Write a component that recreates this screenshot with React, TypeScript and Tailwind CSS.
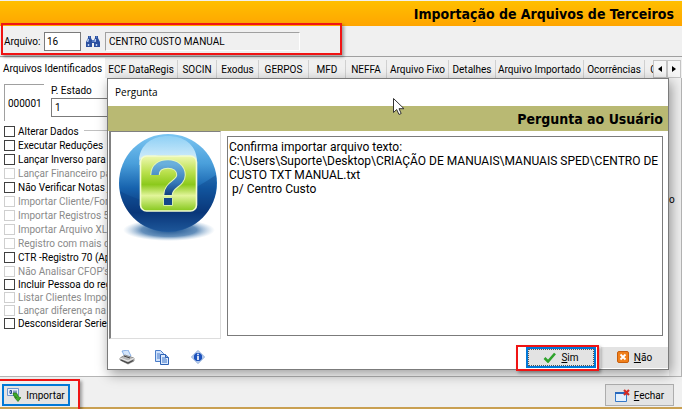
import type { ReactNode } from "react";

const tabs = [
  { name: "ECF DataRegis", width: "w-[73px]" },
  { name: "SOCIN", width: "w-[39px]" },
  { name: "Exodus", width: "w-[42px]" },
  { name: "GERPOS", width: "w-[50px]" },
  { name: "MFD", width: "w-[37px]" },
  { name: "NEFFA", width: "w-[41px]" },
  { name: "Arquivo Fixo", width: "w-[62px]" },
  { name: "Detalhes", width: "w-[47px]" },
  { name: "Arquivo Importado", width: "w-[88px]" },
  { name: "Ocorrências", width: "w-[61px]" },
  { name: "C", width: "w-[18px]" },
];

type Option = { label: string; enabled: boolean };

const options: Option[] = [
  { label: "Alterar Dados", enabled: true },
  { label: "Executar Reduções", enabled: true },
  { label: "Lançar Inverso para N", enabled: true },
  { label: "Lançar Financeiro par", enabled: false },
  { label: "Não Verificar Notas já", enabled: true },
  { label: "Importar Cliente/Forne", enabled: false },
  { label: "Importar Registros 54", enabled: false },
  { label: "Importar Arquivo XLS", enabled: false },
  { label: "Registro com mais de", enabled: false },
  { label: "CTR -Registro 70 (Ap", enabled: true },
  { label: "Não Analisar CFOP's", enabled: false },
];

const lastOptions: Option[] = [
  { label: "Incluir Pessoa do regi", enabled: true },
  { label: "Listar Clientes Importa", enabled: false },
  { label: "Lançar diferença na c", enabled: false },
  { label: "Desconsiderar Serie a", enabled: true },
];

function Check({ label, enabled }: Option) {
  return (
    <label
      className={`flex items-center gap-[3px] whitespace-nowrap ${enabled ? "text-black" : "text-[#8a8a8a]"}`}
    >
      <input
        type="checkbox"
        disabled={!enabled}
        className={`size-[11px] shrink-0 appearance-none border bg-white ${enabled ? "border-[#404040]" : "border-[#cfcfcf]"}`}
      />
      {label}
    </label>
  );
}

function Highlight({ className }: { className: string }) {
  return (
    <div
      className={`pointer-events-none absolute border-2 border-[#f01414] shadow-[2px_2px_3px_rgba(0,0,0,0.35)] ${className}`}
    />
  );
}

function Binoculars() {
  return (
    <svg viewBox="0 0 14 13" className="h-[13px] w-[14px]">
      <path d="M2 1h3v2l1 2h2l1-2V1h3v2l2 4v5H8V8H6v4H0V7l2-4z" fill="#2b50a0" />
      <path d="M2.5 4 1.5 7M9.5 4 9 7M2.5 9v2M10.5 9v2" stroke="#b9d0f5" strokeWidth="1.4" />
      <path d="M3 2h1M10 2h1M6 6h2" stroke="#7ea4e6" />
    </svg>
  );
}

function QuestionBall() {
  return (
    <svg viewBox="0 0 104 110" className="h-[110px] w-[104px]" role="img" aria-label="Pergunta">
      <defs>
        <linearGradient id="ball" x1="0" y1="0" x2="0" y2="1">
          <stop offset="0" stopColor="#7cc6f2" />
          <stop offset="0.3" stopColor="#4a9fdb" />
          <stop offset="0.55" stopColor="#1763ae" />
          <stop offset="0.8" stopColor="#0a3475" />
          <stop offset="1" stopColor="#2a66a8" />
        </linearGradient>
        <linearGradient id="gloss" x1="0" y1="0" x2="0" y2="1">
          <stop offset="0" stopColor="#8fd0f5" />
          <stop offset="1" stopColor="#d3edfb" />
        </linearGradient>
        <linearGradient id="card" x1="0" y1="0" x2="0" y2="1">
          <stop offset="0" stopColor="#eef8b0" />
          <stop offset="0.3" stopColor="#b9e04c" />
          <stop offset="0.52" stopColor="#8cc91c" />
          <stop offset="0.72" stopColor="#e2f59a" />
          <stop offset="1" stopColor="#86c81c" />
        </linearGradient>
        <linearGradient id="mark" x1="0" y1="0" x2="0" y2="1">
          <stop offset="0" stopColor="#6ab0dc" />
          <stop offset="0.6" stopColor="#3679b8" />
          <stop offset="1" stopColor="#123f80" />
        </linearGradient>
        <radialGradient id="shade">
          <stop offset="0" stopColor="#174f8e" />
          <stop offset="0.6" stopColor="#3f74aa" stopOpacity="0.8" />
          <stop offset="1" stopColor="#8fb3d4" stopOpacity="0" />
        </radialGradient>
      </defs>
      <ellipse cx="53" cy="97" rx="46" ry="11" fill="url(#shade)" />
      <circle cx="52" cy="50" r="49" fill="url(#ball)" />
      <path d="M4 58q20 12 40 10t56-26q3 30-19 47Q54 108 24 90 6 76 4 58z" fill="#0a3d82" opacity="0.35" />
      <path d="M23 27C24 11 37 3 52 3s28 8 29 24q-29-10-58 0z" fill="url(#gloss)" />
      <path d="M23 27q29-10 58 0v5H23z" fill="#c9e8f9" opacity="0.6" />
      <rect x="24.5" y="23" width="56" height="55" rx="6" fill="url(#card)" stroke="#f2fbd0" strokeWidth="1.6" />
      <path
        d="M39 42c0-8 6-11 13-11s13 4 13 11c0 9-13 9-13 21"
        fill="none"
        stroke="#e4f5b8"
        strokeWidth="9.5"
      />
      <path d="M39 42c0-8 6-11 13-11s13 4 13 11c0 9-13 9-13 20" fill="none" stroke="url(#mark)" strokeWidth="7.5" />
      <path d="M47.500 64.500h9v8h-9z" fill="#15478a" stroke="#d6efa4" />
    </svg>
  );
}

function Printer() {
  return (
    <svg viewBox="0 0 16 15" className="h-[15px] w-4">
      <path d="m3 1 6-1 3 6-5 3z" fill="#d5e6fb" stroke="#6f9ede" strokeWidth="0.8" />
      <path d="m1 8 5-3 9 3v3l-6 3-8-4z" fill="#b8b8b8" stroke="#777" strokeWidth="0.7" />
      <path d="m1 8 8 3 6-3" fill="none" stroke="#eee" />
      <path d="m2 10 7 3 5-2.500" fill="none" stroke="#444" strokeWidth="1.3" />
      <path d="m5 6 6 2" stroke="#444" />
    </svg>
  );
}

function Pages() {
  return (
    <svg viewBox="0 0 14 15" className="h-[15px] w-3.5">
      <path d="M.5.5h5l3 3v8h-8z" fill="#cfe1fb" stroke="#4a7dc9" />
      <path d="M2 4h3M2 6h3M2 8h3" stroke="#4a7dc9" />
      <path d="M5.500 4.500h5l3 3v7h-8z" fill="#dceafd" stroke="#2e62b4" />
      <path d="M7 8h4M7 10h5M7 12h5" stroke="#3c74c8" />
      <path d="M10.500 4.500v3h3" fill="#86ace8" stroke="#2e62b4" />
    </svg>
  );
}

function Info() {
  return (
    <svg viewBox="0 0 14 14" className="size-3.5">
      <path d="m7 .5 6.500 6.500L7 13.500.5 7z" fill="#dbe7f8" stroke="#7f9fd0" />
      <circle cx="7" cy="7" r="4.300" fill="#1c52bd" />
      <path d="M7 5.800V10M7 3.700V5" stroke="#fff" strokeWidth="1.600" />
    </svg>
  );
}

function ImportIcon() {
  return (
    <svg viewBox="0 0 14 14" className="size-3.5">
      <path d="M.5.5h11v7h-11z" fill="#e9f0fb" stroke="#6f97cf" />
      <path d="M3 2.500h1.500v3H3zM7 2.500v3M9 2.500v3" fill="none" stroke="#23498f" />
      <path d="M6 5q0 4 3.500 4.500H7.500l3.500 4 3-4h-1.500Q11 8 9.500 5z" fill="#3faa2a" stroke="#1c7015" strokeWidth="0.7" />
    </svg>
  );
}

function CloseWindow() {
  return (
    <svg viewBox="0 0 15 13" className="h-[13px] w-[15px]">
      <path d="M.5 3.500h11v9H.5z" fill="#e4f0fd" stroke="#3478c8" />
      <path d="M0 4h12" stroke="#2868bd" strokeWidth="2" />
      <path d="m9 1 5 5M14 1 9 6" stroke="#d32a24" strokeWidth="2.200" />
    </svg>
  );
}

function Button({ children, className }: { children: ReactNode; className: string }) {
  return (
    <button type="button" className={`flex items-center justify-center bg-[#e3e3e3] ${className}`}>
      {children}
    </button>
  );
}

function Dialog() {
  return (
    <section
      role="dialog"
      aria-label="Pergunta"
      className="absolute top-[78px] right-[13px] left-[107px] border border-[#7b7b7b] bg-white shadow-[2px_4px_12px_rgba(0,0,0,0.4)]"
    >
      <div className="flex h-[27px] items-center px-[7px] font-['Open_Sans',sans-serif] text-[10px]">Pergunta</div>
      <h2 className="h-[25px] bg-[#b9b973] pr-[5px] text-right font-['DejaVu_Sans_Condensed','Noto_Sans',sans-serif] text-[14px] leading-[26px] font-bold">
        Pergunta ao Usuário
      </h2>
      <div className="flex items-start pr-[5px] pl-px">
        <div className="mr-[6px] h-[208px] w-[112px] shrink-0 border-t border-r border-b border-l-2 border-t-[#808080] border-r-[#dddddd] border-b-[#dddddd] border-l-[#808080] pt-px pl-[5px]">
          <QuestionBall />
        </div>
        <textarea
          readOnly
          aria-label="Mensagem"
          className="mt-[5px] block h-[200px] min-w-0 flex-1 resize-none overflow-hidden border border-[#7b7b7b] px-px py-[3px] font-[Roboto,sans-serif] text-[12px] leading-[14px] outline-none"
          value={
            "Confirma importar arquivo texto:\nC:\\Users\\Suporte\\Desktop\\CRIAÇÃO DE MANUAIS\\MANUAIS SPED\\CENTRO DE\nCUSTO TXT MANUAL.txt\n p/ Centro Custo"
          }
        />
      </div>
      <div className="flex h-[30px] items-center pt-[6px] pl-[11px]">
        <button type="button" aria-label="Imprimir" className="mr-5">
          <Printer />
        </button>
        <button type="button" aria-label="Copiar" className="mr-[22px]">
          <Pages />
        </button>
        <button type="button" aria-label="Informações">
          <Info />
        </button>
        <Button className="ml-auto h-[21px] w-[70px] gap-[5px] border-2 border-[#0078d7] outline-1 -outline-offset-3 outline-dotted outline-[#555]">
          <svg viewBox="0 0 13 11" className="h-[11px] w-[13px]">
            <path d="m1.500 6 3.500 3.500L12 1.500" fill="none" stroke="#2fa32c" strokeWidth="2.600" />
          </svg>
          <span>
            <u>S</u>im
          </span>
        </Button>
        <Button className="ml-[5px] h-[21px] w-[67px] gap-[5px]">
          <svg viewBox="0 0 12 12" className="size-3">
            <rect x="0.500" y="0.500" width="11" height="11" rx="1.500" fill="#f07f1a" stroke="#c85e0c" />
            <path d="m3.500 3.500 5 5M8.500 3.500l-5 5" stroke="#fff" strokeWidth="1.800" />
          </svg>
          <span>
            <u>N</u>ão
          </span>
        </Button>
      </div>
    </section>
  );
}

export default function App() {
  return (
    <main className="relative flex min-h-screen flex-col overflow-hidden bg-[#f0f0f0] font-[Roboto,sans-serif] text-[10px] leading-[13px] text-black">
      <h1 className="mt-px h-[25px] bg-linear-to-b from-[#ffbf00] to-[#ffa500] pr-2 text-right font-['DejaVu_Sans_Condensed','Noto_Sans',sans-serif] text-[14px] leading-[26px] font-bold">
        Importação de Arquivos de Terceiros
      </h1>

      <form className="flex h-[30px] items-center pl-1">
        <label htmlFor="arquivo" className="w-10 whitespace-nowrap">
          Arquivo:
        </label>
        <input
          id="arquivo"
          defaultValue="16"
          className="h-[19px] w-[37px] border border-[#7b7b7b] bg-white px-0.5 outline-none"
        />
        <button type="button" aria-label="Procurar" className="mx-[5px]">
          <Binoculars />
        </button>
        <input
          aria-label="Descrição"
          readOnly
          value="CENTRO CUSTO MANUAL"
          className="h-[19px] w-[195px] border border-t-[#a0a0a0] border-r-white border-b-white border-l-[#a0a0a0] bg-[#f0f0f0] px-[3px] outline-none"
        />
      </form>

      <div className="flex h-[22px] items-end overflow-hidden border-t border-[#a0a0a0]">
        <nav role="tablist" className="flex min-w-0 flex-1 items-end overflow-hidden whitespace-nowrap">
          <button type="button" role="tab" aria-selected="true" className="h-5 w-[105px] shrink-0 bg-white">
            Arquivos Identificados
          </button>
          {tabs.map((tab) => (
            <button
              key={tab.name}
              type="button"
              role="tab"
              aria-selected="false"
              className={`h-[18px] shrink-0 border-r border-[#d0d0d0] bg-[#f0f0f0] text-center ${tab.width}`}
            >
              {tab.name}
            </button>
          ))}
        </nav>
        <div className="mr-px flex h-[18px]">
          {["Anterior", "Próxima"].map((name, i) => (
            <button
              key={name}
              type="button"
              aria-label={name}
              className="flex w-[14px] items-center justify-center border border-[#c4c4c4] bg-[#f6f6f6]"
            >
              <svg viewBox="0 0 4 6" className="h-1.5 w-1">
                <path d={i === 0 ? "M4 0v6L0 3z" : "M0 0v6l4-3z"} />
              </svg>
            </button>
          ))}
        </div>
      </div>

      <div className="flex flex-1 border-r border-b border-[#b4b4b4] bg-white pl-1">
        <div className="flex-1 overflow-hidden pt-[6px]">
          <div className="flex h-[40px]">
            <div className="flex h-[37px] w-10 items-center border-t border-l border-[#a0a0a0] pl-[3px]">
              000001
            </div>
            <label className="flex w-40 flex-col pl-[7px]">
              P. Estado
              <input
                defaultValue="1"
                className="mt-px h-[19px] w-full border border-[#7b7b7b] bg-white px-[3px] outline-none"
              />
            </label>
          </div>
          <fieldset aria-label="Opções de importação" className="flex flex-col">
            <div className="flex">
              <div className="grid w-[80px] auto-rows-[14px]">
                {options.map((option) => (
                  <Check key={option.label} {...option} />
                ))}
              </div>
              <div className="mt-[6px] w-40 border-t border-[#c0c0c0]" />
            </div>
            <div className="grid auto-rows-[13px]">
              {lastOptions.map((option) => (
                <Check key={option.label} {...option} />
              ))}
            </div>
          </fieldset>
        </div>
        <div className="w-[12px] bg-[#f0f0f0] pt-[115px]">o</div>
      </div>

      <footer className="flex h-[32px] items-start justify-between border-b-2 border-[#c9a052] pt-[7px] pr-2 pl-0.5">
        <Button className="h-[22px] w-[68px] gap-[5px] border-2 border-[#0078d7]">
          <ImportIcon />
          Importar
        </Button>
        <Button className="h-[22px] w-[69px] gap-1 border border-[#adadad]">
          <CloseWindow />
          <span>
            <u>F</u>echar
          </span>
        </Button>
      </footer>

      <Dialog />

      <Highlight className="top-[23px] left-px h-[32px] w-[341px]" />
      <Highlight className="right-[83px] bottom-[38px] h-[26px] w-[83px]" />
      <Highlight className="bottom-0 -left-0.5 h-[30px] w-[82px] border-b-0" />
      <svg viewBox="0 0 12 18" className="pointer-events-none absolute top-[98px] left-[393px] h-[18px] w-3">
        <path d="M.5.5v14l3.200-3 2.300 5 2.200-1-2.200-4.800H11z" fill="#fff" stroke="#333" />
      </svg>
    </main>
  );
}
